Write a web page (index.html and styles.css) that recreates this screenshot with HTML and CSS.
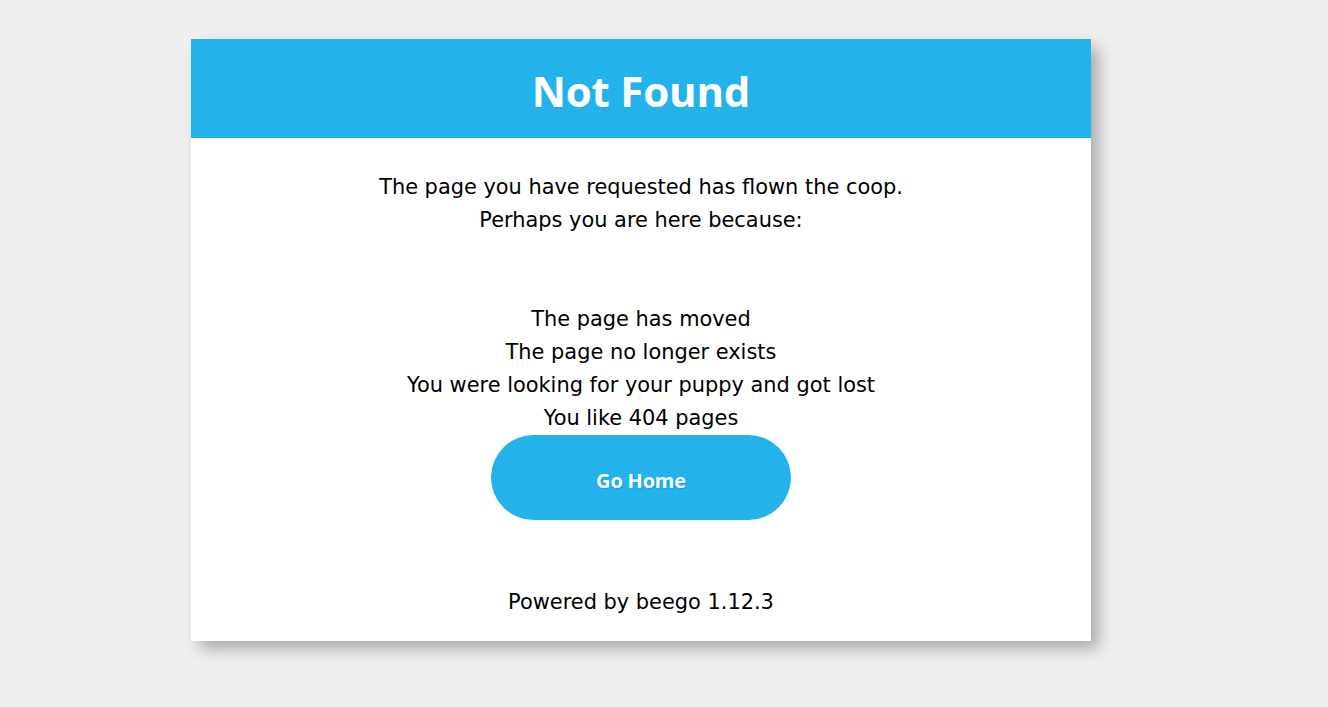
FILE: index.html
```html
<!DOCTYPE html>
<html>
<head>
<meta charset="UTF-8">
<title>Not Found</title>
<link rel="stylesheet" href="styles.css">
</head>
<body>
  <div class="wrapper">
    <div class="navtop">
      <h1 class="title">Not Found</h1>
    </div>
    <div class="content">
      <p class="intro">The page you have requested has flown the coop.<br>Perhaps you are here because:</p>
      <ul class="reasons">
        <li>The page has moved</li>
        <li>The page no longer exists</li>
        <li>You were looking for your puppy and got lost</li>
        <li>You like 404 pages</li>
      </ul>
      <a href="#" class="button" title="Home">Go Home</a>
      <p class="powered">Powered by beego 1.12.3</p>
    </div>
  </div>
  <div class="watermark" aria-hidden="true">
    <div class="wm-row">wenwb_yangwenwb_yangwenwb_yangwenwb_yangwenwb_yangwenwb_yangwenwb_yangwenwb_yangwenwb_yang</div>
    <div class="wm-row">wenwb_yangwenwb_yangwenwb_yangwenwb_yangwenwb_yangwenwb_yangwenwb_yangwenwb_yangwenwb_yang</div>
    <div class="wm-row">wenwb_yangwenwb_yangwenwb_yangwenwb_yangwenwb_yangwenwb_yangwenwb_yangwenwb_yangwenwb_yang</div>
    <div class="wm-row">wenwb_yangwenwb_yangwenwb_yangwenwb_yangwenwb_yangwenwb_yangwenwb_yangwenwb_yangwenwb_yang</div>
    <div class="wm-row">wenwb_yangwenwb_yangwenwb_yangwenwb_yangwenwb_yangwenwb_yangwenwb_yangwenwb_yangwenwb_yang</div>
    <div class="wm-row">wenwb_yangwenwb_yangwenwb_yangwenwb_yangwenwb_yangwenwb_yangwenwb_yangwenwb_yangwenwb_yang</div>
    <div class="wm-row">wenwb_yangwenwb_yangwenwb_yangwenwb_yangwenwb_yangwenwb_yangwenwb_yangwenwb_yangwenwb_yang</div>
    <div class="wm-row">wenwb_yangwenwb_yangwenwb_yangwenwb_yangwenwb_yangwenwb_yangwenwb_yangwenwb_yangwenwb_yang</div>
  </div>
</body>
</html>
```
FILE: styles.css
```css
* {
  margin: 0;
  padding: 0;
  box-sizing: border-box;
}

html, body {
  height: 100%;
}

body {
  background-color: #EFEFEF;
  font-family: "DejaVu Sans", "Noto Sans", sans-serif;
  font-size: 20.9px;
  color: #000;
  overflow: hidden;
}

.wrapper {
  width: 900px;
  margin: 39px 0 0 191px;
  background: #FFFFFF;
  text-align: center;
  box-shadow: 7.5px 7.5px 15px rgba(0, 0, 0, 0.3);
}

.navtop {
  height: 99px;
  background-color: #24B2EB;
  display: flex;
  align-items: center;
  justify-content: center;
  padding-top: 4px;
}

.title {
  color: #FFFFFF;
  font-family: "Open Sans", "DejaVu Sans", sans-serif;
  font-weight: 700;
  font-size: 42px;
  letter-spacing: -0.2px;
  line-height: 1;
}

.content {
  padding: 33px 0 22px;
  line-height: 33px;
}

.intro {
  margin-bottom: 66px;
}

.reasons {
  list-style: none;
}

.button {
  display: flex;
  align-items: center;
  justify-content: center;
  width: 300px;
  height: 85px;
  margin: 0 auto;
  padding-top: 5px;
  border-radius: 150px;
  background-color: #24B2EB;
  color: #FFFFFF;
  text-decoration: none;
  font-family: "Open Sans", "DejaVu Sans", sans-serif;
  font-weight: 700;
  font-size: 20px;
  letter-spacing: -0.2px;
  text-shadow: 1px 1px 0 #00A5FF;
}

.powered {
  margin-top: 65.5px;
}

.watermark {
  position: absolute;
  top: 22px;
  left: -1px;
  width: 1330px;
  height: 690px;
  overflow: hidden;
  pointer-events: none;
  z-index: 10;
}

.wm-row {
  height: 90px;
  line-height: 90px;
  white-space: nowrap;
  font-family: "Liberation Sans", Arial, sans-serif;
  font-size: 30.3px;
  color: rgba(0, 0, 0, 0.02);
}
```
